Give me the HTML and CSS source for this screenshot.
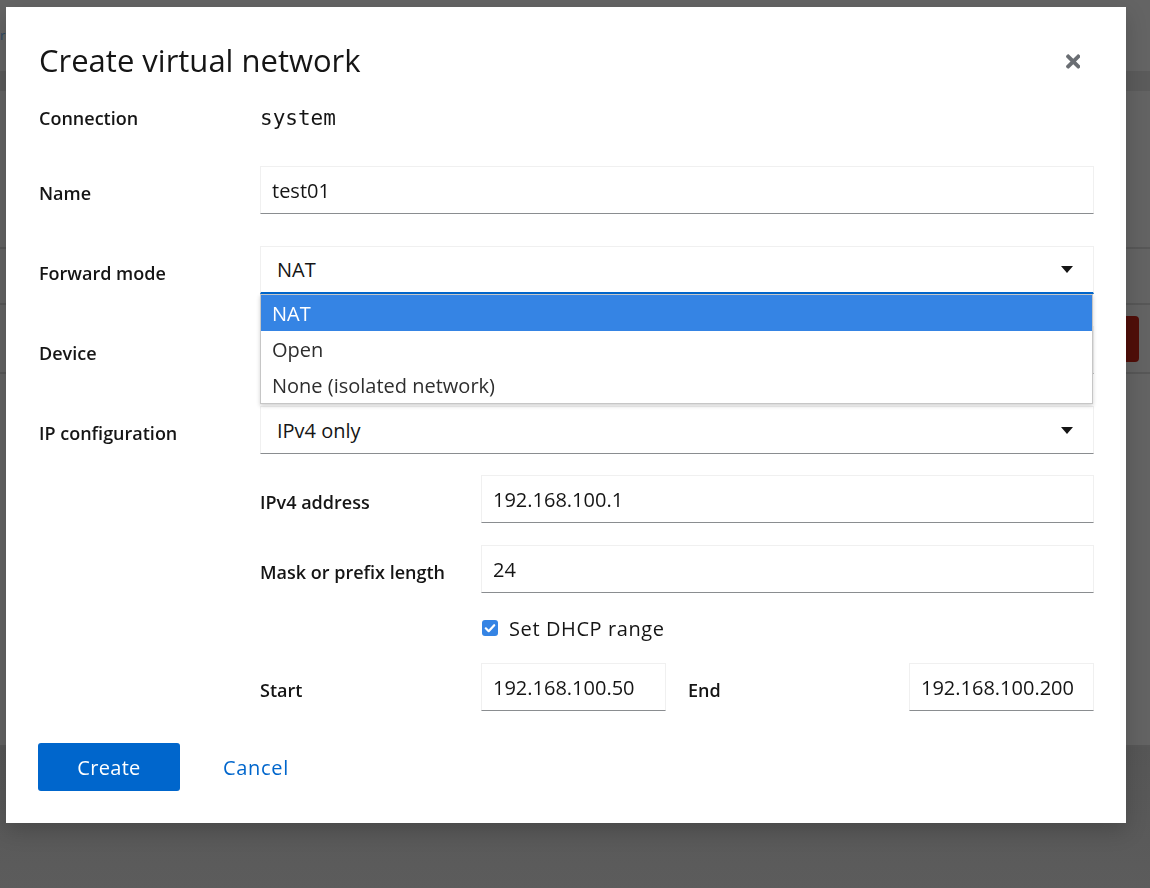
FILE: index.html
```html
<!DOCTYPE html>
<html lang="en">
<head>
<meta charset="utf-8">
<title>Create virtual network</title>
<link rel="stylesheet" href="styles.css">
</head>
<body>
<div class="page">
  <div class="page-top"><span class="page-link">r</span></div>
  <div class="page-band"></div>
  <div class="page-row page-row-1"></div>
  <div class="page-row page-row-2"></div>
  <div class="page-row page-row-3"><span class="page-danger"></span></div>
  <div class="page-row page-row-4"></div>
  <div class="page-bottom"></div>
</div>

<div class="modal" role="dialog" aria-label="Create virtual network">
  <header class="modal-header">
    <h1 class="modal-title">Create virtual network</h1>
    <button class="modal-close" aria-label="Close">
      <svg viewBox="0 0 352 512" width="14.5" height="21" aria-hidden="true"><path fill="currentColor" d="M242.72 256l100.07-100.07c12.28-12.28 12.28-32.19 0-44.48l-22.24-22.24c-12.28-12.28-32.19-12.28-44.48 0L176 189.28 75.930 89.21c-12.28-12.28-32.19-12.28-44.48 0L9.21 111.45c-12.28 12.28-12.28 32.19 0 44.48L109.28 256 9.21 356.07c-12.28 12.28-12.28 32.19 0 44.48l22.24 22.24c12.28 12.28 32.2 12.28 44.48 0L176 322.72l100.07 100.07c12.28 12.28 32.2 12.28 44.48 0l22.24-22.24c12.28-12.28 12.28-32.19 0-44.48L242.72 256z"/></svg>
    </button>
  </header>

  <div class="modal-body">
    <div class="row row-connection">
      <div class="label label-plain">Connection</div>
      <div class="mono">system</div>
    </div>

    <div class="row row-name">
      <div class="label">Name</div>
      <div class="input">test01</div>
    </div>

    <div class="row row-gap">
      <div class="label">Forward mode</div>
      <div class="select select-open">
        <span>NAT</span>
        <svg class="caret" viewBox="0 0 12 7" width="12" height="7" aria-hidden="true"><path d="M0 0h12L6 7z"/></svg>
        <ul class="popup">
          <li class="option option-active">NAT</li>
          <li class="option">Open</li>
          <li class="option">None (isolated network)</li>
        </ul>
      </div>
    </div>

    <div class="row row-gap">
      <div class="label">Device</div>
      <div class="select">
        <span></span>
        <svg class="caret" viewBox="0 0 12 7" width="12" height="7" aria-hidden="true"><path d="M0 0h12L6 7z"/></svg>
      </div>
    </div>

    <div class="row row-gap">
      <div class="label">IP configuration</div>
      <div class="select">
        <span>IPv4 only</span>
        <svg class="caret" viewBox="0 0 12 7" width="12" height="7" aria-hidden="true"><path d="M0 0h12L6 7z"/></svg>
      </div>
    </div>

    <div class="sub">
      <div class="row row-ipv4">
        <div class="label">IPv4 address</div>
        <div class="input">192.168.100.1</div>
      </div>
      <div class="row row-mask">
        <div class="label">Mask or prefix length</div>
        <div class="input">24</div>
      </div>
      <div class="check-row">
        <span class="checkbox">
          <svg viewBox="0 0 16 16" width="16" height="16" aria-hidden="true"><path d="M3.8 8.3l2.9 2.9 5.5-6" fill="none" stroke="#fff" stroke-width="2.2" stroke-linecap="round" stroke-linejoin="round"/></svg>
        </span>
        <span class="check-label">Set DHCP range</span>
      </div>
      <div class="row row-range">
        <div class="label">Start</div>
        <div class="input input-small">192.168.100.50</div>
        <div class="label label-end">End</div>
        <div class="input input-small">192.168.100.200</div>
      </div>
    </div>
  </div>

  <footer class="modal-footer">
    <button class="btn-primary">Create</button>
    <button class="btn-link">Cancel</button>
  </footer>
</div>
</body>
</html>
```

FILE: styles.css
```css
* { box-sizing: border-box; }

html, body {
  margin: 0;
  height: 100%;
}

body {
  background: #636363;
  font-family: "Open Sans", "Noto Sans", sans-serif;
  color: #151515;
  overflow: hidden;
}

/* ----- dimmed page behind the dialog ----- */
.page {
  height: 888px;
  display: flex;
  flex-direction: column;
}
.page-top {
  height: 71px;
  background: #646464;
  display: flex;
  align-items: center;
}
.page-link {
  font-size: 13px;
  line-height: 13px;
  color: #2b4763;
  margin-left: 0;
}
.page-band {
  height: 20px;
  background: #5b5b5b;
}
.page-row {
  border-bottom: 2px solid #575757;
  background: #636363;
  display: flex;
  align-items: center;
  justify-content: flex-end;
}
.page-row-1 { height: 158px; }
.page-row-2 { height: 56px; }
.page-row-3 { height: 69px; }
.page-row-4 { height: 373px; }
.page-danger {
  width: 100px;
  height: 46px;
  margin-right: 11px;
  background: #500e09;
  border-radius: 4px;
}
.page-bottom {
  flex: 1;
  background: linear-gradient(#565656, #5c5c5c);
}

/* ----- dialog ----- */
.modal {
  position: fixed;
  left: 6px;
  top: 7px;
  width: 1120px;
  height: 816px;
  background: #fff;
  padding: 32px 32px 32px 33px;
  box-shadow: 0 8px 20px rgba(0, 0, 0, 0.18);
  display: flex;
  flex-direction: column;
}

.modal-header {
  height: 42px;
  display: flex;
  align-items: center;
  justify-content: space-between;
}
.modal-title {
  margin: 0;
  font-size: 31px;
  font-weight: 400;
  line-height: 42px;
  color: #151515;
}
.modal-close {
  width: 44px;
  height: 42px;
  margin-top: 3px;
  margin-right: -1px;
  border: 0;
  padding: 0;
  background: none;
  color: #6a6e73;
  display: flex;
  align-items: center;
  justify-content: center;
}

.modal-body {
  margin-top: 13px;
  display: flex;
  flex-direction: column;
}

.row {
  display: flex;
  align-items: center;
  height: 48px;
}
.row-name { margin-top: 24px; }
.row-gap { margin-top: 32px; }
.row-ipv4 { margin-top: 21px; }
.row-mask { margin-top: 22px; }
.row-range { margin-top: 23px; }

.label {
  width: 221px;
  flex: none;
  font-size: 18px;
  font-weight: 600;
  padding-top: 6px;
  color: #151515;
}
.label-plain { padding-top: 0; }

.mono {
  font-family: "DejaVu Sans Mono", "Liberation Mono", monospace;
  font-size: 21px;
  color: #151515;
}

.input, .select {
  flex: 1;
  height: 48px;
  border: 1px solid #f0f0f0;
  border-bottom-color: #8a8d90;
  display: flex;
  align-items: center;
  font-size: 20px;
  color: #151515;
  background: #fff;
}
.input { padding: 0 11px; }
.input-small { flex: none; width: 185px; }
.label-end { margin-left: 22px; }

.select {
  position: relative;
  padding: 0 20px 0 16px;
  justify-content: space-between;
}
.select-open {
  border-bottom: 2px solid #0066cc;
}
.caret { fill: #151515; }

.popup {
  position: absolute;
  z-index: 2;
  left: -1px;
  top: calc(100% + 2px);
  width: 833px;
  margin: 0;
  padding: 0;
  list-style: none;
  background: #fff;
  border: 1px solid #c6c6c6;
  box-shadow: 0 2px 4px rgba(0, 0, 0, 0.18);
}
.option {
  height: 36px;
  padding-left: 11px;
  display: flex;
  align-items: center;
  font-size: 20px;
  color: #2e2e2e;
}
.option-active {
  background: #3584e4;
  color: #fff;
}

.sub {
  margin-left: 221px;
  display: flex;
  flex-direction: column;
}

.check-row {
  margin-top: 23px;
  height: 24px;
  display: flex;
  align-items: center;
  padding-left: 221px;
}
.checkbox {
  width: 16px;
  height: 16px;
  margin-left: 1px;
  border-radius: 3px;
  background: #3584e4;
  display: flex;
}
.check-label {
  margin-left: 11px;
  font-size: 20px;
  letter-spacing: 0.6px;
  color: #151515;
}

.modal-footer {
  margin-top: 32px;
  display: flex;
  align-items: center;
}
.btn-primary {
  width: 142px;
  height: 48px;
  margin-left: -1px;
  border: 0;
  border-radius: 3px;
  background: #0066cc;
  color: #fff;
  font-family: inherit;
  font-size: 20px;
  letter-spacing: 0.3px;
}
.btn-link {
  margin-left: 43px;
  padding: 0;
  border: 0;
  background: none;
  color: #0066cc;
  font-family: inherit;
  font-size: 20px;
  letter-spacing: 0.7px;
}
```
